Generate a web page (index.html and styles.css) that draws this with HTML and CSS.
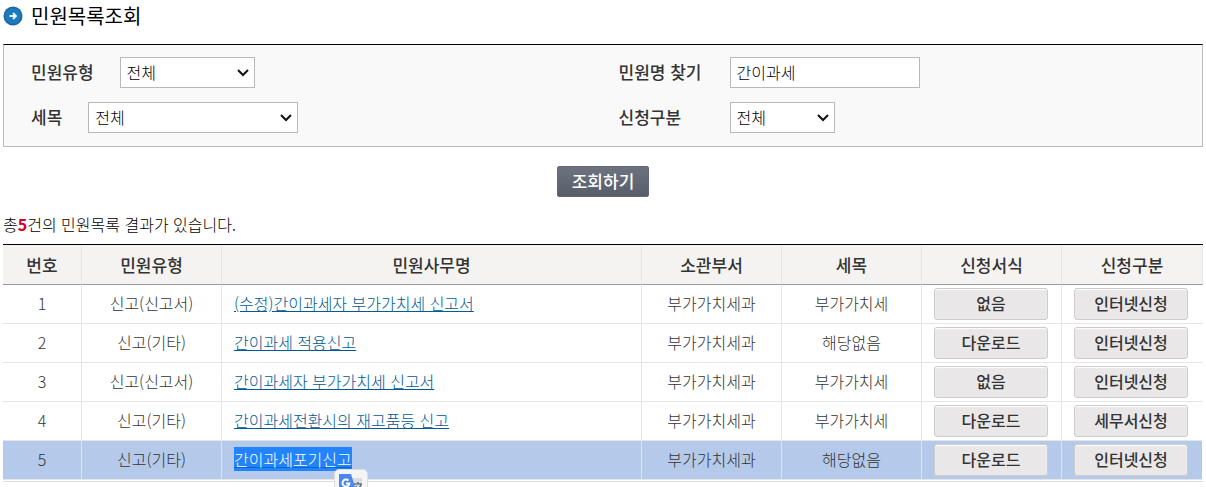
FILE: index.html
```html
<!DOCTYPE html>
<html lang="ko">
<head>
    <meta charset="UTF-8">
    <meta name="viewport" content="width=device-width, initial-scale=1.0">
    <title>민원목록조회</title>
    <link rel="stylesheet" href="styles.css">
</head>
<body>
    <div class="page">
        <h1 class="page-title">
            <svg width="20" height="20" viewBox="0 0 20 20" aria-hidden="true">
                <circle cx="10" cy="10" r="9.5" fill="#1d659f"/>
                <circle cx="10" cy="10" r="8" fill="#1b7bbd"/>
                <path d="M6.5 10h6M10 7l3 3-3 3" fill="none" stroke="#e8f5fc" stroke-width="1.8"/>
            </svg>
            민원목록조회
        </h1>

        <form id="searchForm">
            <div class="search-box">
                <div class="form-group">
                    <label for="type">민원유형</label>
                    <select id="type" class="select-medium"><option>전체</option></select>
                </div>
                <div class="form-group form-group-right">
                    <label for="keyword">민원명 찾기</label>
                    <input type="text" id="keyword" value="간이과세">
                </div>
                <div class="form-group">
                    <label for="tax">세목</label>
                    <select id="tax" class="select-wide"><option>전체</option></select>
                </div>
                <div class="form-group form-group-right">
                    <label for="method">신청구분</label>
                    <select id="method" class="select-small"><option>전체</option></select>
                </div>
            </div>
            <div class="search-action">
                <button type="submit" class="btn-search">조회하기</button>
            </div>
        </form>

        <p class="result-count">총<strong>5</strong>건의 민원목록 결과가 있습니다.</p>

        <table class="result-table">
            <colgroup>
                <col class="col-no">
                <col class="col-normal">
                <col>
                <col class="col-normal">
                <col class="col-normal">
                <col class="col-normal">
                <col class="col-last">
            </colgroup>
            <thead>
                <tr>
                    <th scope="col">번호</th>
                    <th scope="col">민원유형</th>
                    <th scope="col">민원사무명</th>
                    <th scope="col">소관부서</th>
                    <th scope="col">세목</th>
                    <th scope="col">신청서식</th>
                    <th scope="col">신청구분</th>
                </tr>
            </thead>
            <tbody>
                <tr>
                    <td>1</td>
                    <td>신고(신고서)</td>
                    <td class="name"><a href="#">(수정)간이과세자 부가가치세 신고서</a></td>
                    <td>부가가치세과</td>
                    <td>부가가치세</td>
                    <td class="action"><button type="button" class="btn">없음</button></td>
                    <td class="action"><button type="button" class="btn">인터넷신청</button></td>
                </tr>
                <tr>
                    <td>2</td>
                    <td>신고(기타)</td>
                    <td class="name"><a href="#">간이과세 적용신고</a></td>
                    <td>부가가치세과</td>
                    <td>해당없음</td>
                    <td class="action"><button type="button" class="btn">다운로드</button></td>
                    <td class="action"><button type="button" class="btn">인터넷신청</button></td>
                </tr>
                <tr>
                    <td>3</td>
                    <td>신고(신고서)</td>
                    <td class="name"><a href="#">간이과세자 부가가치세 신고서</a></td>
                    <td>부가가치세과</td>
                    <td>부가가치세</td>
                    <td class="action"><button type="button" class="btn">없음</button></td>
                    <td class="action"><button type="button" class="btn">인터넷신청</button></td>
                </tr>
                <tr>
                    <td>4</td>
                    <td>신고(기타)</td>
                    <td class="name"><a href="#">간이과세전환시의 재고품등 신고</a></td>
                    <td>부가가치세과</td>
                    <td>부가가치세</td>
                    <td class="action"><button type="button" class="btn">다운로드</button></td>
                    <td class="action"><button type="button" class="btn">세무서신청</button></td>
                </tr>
                <tr class="active">
                    <td>5</td>
                    <td>신고(기타)</td>
                    <td class="name">
                        <a href="#" class="selected">간이과세포기신고</a>
                        <span class="translate">
                            <svg width="24" height="24" viewBox="0 0 24 24" aria-hidden="true">
                                <path d="M9 4h14v19H13z" fill="#dcdcdc"/>
                                <path d="M0 0h12l6 19H0z" fill="#4c86ee"/>
                                <path d="M9.5 6.5A3.5 3.5 0 1 0 10.500 9.500H7" fill="none" stroke="#fff" stroke-width="1.8"/>
                                <path d="M15 10h8M19 8v2M22 10q-1 5-6 8M17 12q2 4 5 6" fill="none" stroke="#607988" stroke-width="1.5"/>
                            </svg>
                        </span>
                    </td>
                    <td>부가가치세과</td>
                    <td>해당없음</td>
                    <td class="action"><button type="button" class="btn">다운로드</button></td>
                    <td class="action"><button type="button" class="btn">인터넷신청</button></td>
                </tr>
            </tbody>
        </table>
    </div>
</body>
</html>
```
FILE: styles.css
```css
body {
    margin: 0;
    background: white;
    color: #333;
    font-family: "Noto Sans CJK KR", sans-serif;
    font-size: 16px;
    line-height: 24px;
}

.page {
    padding: 4px 3px 5px;
    overflow: hidden;
}

.page-title {
    display: flex;
    align-items: center;
    gap: 8px;
    margin: 0 0 16px;
    color: #000;
    font-size: 20px;
    font-weight: 400;
    line-height: 24px;
}

/* 검색 조건 */
.search-box {
    display: grid;
    grid-template-columns: 1fr 1fr;
    gap: 14px 4px;
    padding: 12px 0 13px 27px;
    background: #f9f9f9;
    border: 1px solid #bbb;
    border-top-color: #000;
}

.form-group {
    display: flex;
    align-items: center;
    gap: 26px;
}

.form-group label {
    padding-bottom: 2px;
    font-size: 17px;
    font-weight: 500;
}

.form-group-right label {
    width: 85px;
}

select,
input[type="text"] {
    height: 31px;
    box-sizing: border-box;
    padding: 0 6px 2px;
    background: white;
    border: 1px solid #b8b8b8;
    border-radius: 0;
    color: #000;
    font-family: inherit;
    font-size: 16px;
    font-weight: 300;
}

select {
    appearance: none;
    background: white url("data:image/svg+xml,%3Csvg xmlns='http://www.w3.org/2000/svg' width='12' height='8'%3E%3Cpath d='M1 1l5 5 5-5' fill='none' stroke='%23111' stroke-width='2'/%3E%3C/svg%3E") no-repeat right 5px center;
}

input[type="text"] {
    width: 190px;
}

.select-small {
    width: 105px;
}

.select-medium {
    width: 135px;
}

.select-wide {
    width: 210px;
}

.search-action {
    padding: 19px 0 15px;
    text-align: center;
}

.btn-search {
    display: inline-block;
    height: 31px;
    padding: 0 14px 2px;
    vertical-align: top;
    background: linear-gradient(#6d7480, #575d69);
    border: 1px solid #626975;
    border-radius: 2px;
    color: white;
    font-family: inherit;
    font-size: 17px;
    font-weight: 500;
    line-height: 24px;
}

.result-count {
    margin: 0 0 8px;
    color: #000;
    font-weight: 300;
}

.result-count strong {
    color: #d4002a;
    font-weight: 700;
}

/* 결과 목록 */
.result-table {
    width: 100%;
    padding-bottom: 1px;
    table-layout: fixed;
    border-collapse: separate;
    border-spacing: 0;
    border-top: 1px solid #000;
    border-bottom: 1px solid #ddd;
}

.col-no {
    width: 79px;
}

.col-normal {
    width: 140px;
}

.col-last {
    width: 141px;
}

th {
    height: 39px;
    padding: 0;
    background: #f5f3f2;
    border-right: 1px solid #e5e5e5;
    border-bottom: 1px solid #999;
    font-size: 17px;
    font-weight: 500;
}

td {
    height: 36px;
    padding: 0 0 2px;
    border-right: 1px solid #e5e5e5;
    border-bottom: 1px solid #e5e5e5;
    font-weight: 300;
    text-align: center;
}

td:last-child {
    border-right-color: transparent;
}

.name {
    position: relative;
    padding-left: 12px;
    text-align: left;
}

.name a {
    color: #005a95;
}

.action {
    height: 38px;
    padding: 0 0 0 12px;
    text-align: left;
}

.active td {
    background: #b5caea;
    background-clip: padding-box;
}

.name .selected {
    background: #2383fb;
    color: white;
    text-decoration-color: #0067d2;
}

.btn {
    width: 114px;
    height: 32px;
    padding: 0 0 2px;
    vertical-align: top;
    background: #e9e7e8;
    border: 1px solid #ccc;
    border-radius: 3px;
    box-shadow: inset 0 1px 1px white;
    color: #333;
    font-family: inherit;
    font-size: 16px;
    font-weight: 500;
    line-height: 26px;
}

/* 번역 아이콘은 선택된 글자 아래에 떠 있음 */
.translate {
    position: absolute;
    top: 28px;
    left: 112px;
    padding: 4px;
    background: #f5f5f5;
    border: 1px solid #ddd;
    border-radius: 5px;
    line-height: 0;
}
```
